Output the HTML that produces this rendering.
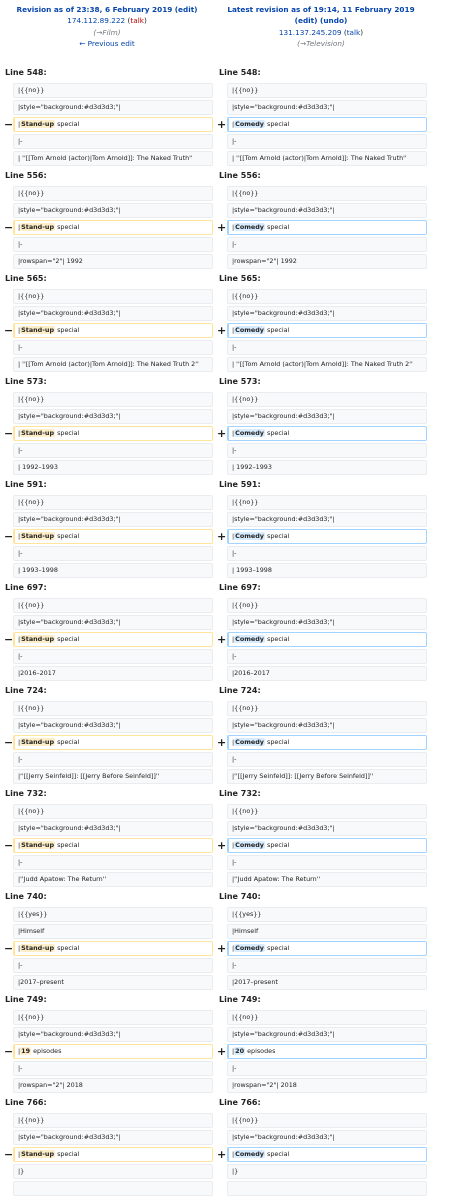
<!DOCTYPE html>
<html><head><meta charset="utf-8"><style>
*{margin:0;padding:0;box-sizing:border-box}
body{width:453px;height:1200px;overflow:hidden;background:#fff;font-family:"DejaVu Sans","Liberation Sans",sans-serif;color:#222}
.top{position:absolute;top:0;left:0;width:453px;height:64px;font-size:7.3px;line-height:11.3px;text-align:center}
.top .c{position:absolute;top:4px;white-space:nowrap}
.b{font-weight:bold;color:#0645ad}
.a{color:#0645ad}
.r{color:#ba0000}
.i{color:#72777d;font-style:italic}
.blk{position:absolute;left:0;width:453px}
.hd{position:absolute;font-size:8px;font-weight:bold;top:4px;color:#222}
.row{position:absolute;height:15px;width:200px;background:#f8f9fa;border:1px solid #eaecf0;border-radius:2px;font-size:6.4px;line-height:13px;padding-left:4px;white-space:nowrap;overflow:hidden;color:#222}
.L{left:13px}.R{left:227px}
.del{background:#fff;border:1px solid #ffe49c;border-left:2px solid #ffe49c;padding-left:3px}
.ins{background:#fff;border:1px solid #a3d3ff;border-left:2px solid #a3d3ff;padding-left:3px}
.del b{background:#feeec8;font-weight:bold;border-radius:2px;padding:0 1px}
.ins b{background:#d8ecff;font-weight:bold;border-radius:2px;padding:0 1px}
.m{position:absolute;font-size:11px;font-weight:bold;line-height:15px}
</style></head><body>
<div class="top">
<div class="c" style="left:0;width:214px"><span class="b">Revision as of 23:38, 6 February 2019</span> <span class="b">(edit)</span><br><span class="a">174.112.89.222</span> (<span class="r">talk</span>)<br><span class="i">(→Film)</span><br><span class="a">← Previous edit</span></div>
<div class="c" style="left:214px;width:214px"><span class="b">Latest revision as of 19:14, 11 February 2019</span><br><span class="b">(edit) (undo)</span><br><span class="a">131.137.245.209</span> (<span class="a">talk</span>)<br><span class="i">(→Television)</span></div>
</div>

<div class="blk" style="top:64px">
<div class="hd" style="left:5px">Line 548:</div><div class="hd" style="left:219px">Line 548:</div>
<div class="row L" style="top:19px">|{{no}}</div><div class="row R" style="top:19px">|{{no}}</div>
<div class="row L" style="top:36px">|style="background:#d3d3d3;"|</div><div class="row R" style="top:36px">|style="background:#d3d3d3;"|</div>
<div class="m" style="left:4px;top:53px">−</div><div class="row L del" style="top:53px">|<b>Stand-up</b> special</div><div class="m" style="left:217px;top:53px">+</div><div class="row R ins" style="top:53px">|<b>Comedy</b> special</div>
<div class="row L" style="top:70px">|-</div><div class="row R" style="top:70px">|-</div>
<div class="row L" style="top:87px">| ''[[Tom Arnold (actor)|Tom Arnold]]: The Naked Truth''</div><div class="row R" style="top:87px">| ''[[Tom Arnold (actor)|Tom Arnold]]: The Naked Truth''</div>
</div>

<div class="blk" style="top:167px">
<div class="hd" style="left:5px">Line 556:</div><div class="hd" style="left:219px">Line 556:</div>
<div class="row L" style="top:19px">|{{no}}</div><div class="row R" style="top:19px">|{{no}}</div>
<div class="row L" style="top:36px">|style="background:#d3d3d3;"|</div><div class="row R" style="top:36px">|style="background:#d3d3d3;"|</div>
<div class="m" style="left:4px;top:53px">−</div><div class="row L del" style="top:53px">|<b>Stand-up</b> special</div><div class="m" style="left:217px;top:53px">+</div><div class="row R ins" style="top:53px">|<b>Comedy</b> special</div>
<div class="row L" style="top:70px">|-</div><div class="row R" style="top:70px">|-</div>
<div class="row L" style="top:87px">|rowspan="2"| 1992</div><div class="row R" style="top:87px">|rowspan="2"| 1992</div>
</div>

<div class="blk" style="top:270px">
<div class="hd" style="left:5px">Line 565:</div><div class="hd" style="left:219px">Line 565:</div>
<div class="row L" style="top:19px">|{{no}}</div><div class="row R" style="top:19px">|{{no}}</div>
<div class="row L" style="top:36px">|style="background:#d3d3d3;"|</div><div class="row R" style="top:36px">|style="background:#d3d3d3;"|</div>
<div class="m" style="left:4px;top:53px">−</div><div class="row L del" style="top:53px">|<b>Stand-up</b> special</div><div class="m" style="left:217px;top:53px">+</div><div class="row R ins" style="top:53px">|<b>Comedy</b> special</div>
<div class="row L" style="top:70px">|-</div><div class="row R" style="top:70px">|-</div>
<div class="row L" style="top:87px">| ''[[Tom Arnold (actor)|Tom Arnold]]: The Naked Truth 2''</div><div class="row R" style="top:87px">| ''[[Tom Arnold (actor)|Tom Arnold]]: The Naked Truth 2''</div>
</div>

<div class="blk" style="top:373px">
<div class="hd" style="left:5px">Line 573:</div><div class="hd" style="left:219px">Line 573:</div>
<div class="row L" style="top:19px">|{{no}}</div><div class="row R" style="top:19px">|{{no}}</div>
<div class="row L" style="top:36px">|style="background:#d3d3d3;"|</div><div class="row R" style="top:36px">|style="background:#d3d3d3;"|</div>
<div class="m" style="left:4px;top:53px">−</div><div class="row L del" style="top:53px">|<b>Stand-up</b> special</div><div class="m" style="left:217px;top:53px">+</div><div class="row R ins" style="top:53px">|<b>Comedy</b> special</div>
<div class="row L" style="top:70px">|-</div><div class="row R" style="top:70px">|-</div>
<div class="row L" style="top:87px">| 1992–1993</div><div class="row R" style="top:87px">| 1992–1993</div>
</div>

<div class="blk" style="top:476px">
<div class="hd" style="left:5px">Line 591:</div><div class="hd" style="left:219px">Line 591:</div>
<div class="row L" style="top:19px">|{{no}}</div><div class="row R" style="top:19px">|{{no}}</div>
<div class="row L" style="top:36px">|style="background:#d3d3d3;"|</div><div class="row R" style="top:36px">|style="background:#d3d3d3;"|</div>
<div class="m" style="left:4px;top:53px">−</div><div class="row L del" style="top:53px">|<b>Stand-up</b> special</div><div class="m" style="left:217px;top:53px">+</div><div class="row R ins" style="top:53px">|<b>Comedy</b> special</div>
<div class="row L" style="top:70px">|-</div><div class="row R" style="top:70px">|-</div>
<div class="row L" style="top:87px">| 1993–1998</div><div class="row R" style="top:87px">| 1993–1998</div>
</div>

<div class="blk" style="top:579px">
<div class="hd" style="left:5px">Line 697:</div><div class="hd" style="left:219px">Line 697:</div>
<div class="row L" style="top:19px">|{{no}}</div><div class="row R" style="top:19px">|{{no}}</div>
<div class="row L" style="top:36px">|style="background:#d3d3d3;"|</div><div class="row R" style="top:36px">|style="background:#d3d3d3;"|</div>
<div class="m" style="left:4px;top:53px">−</div><div class="row L del" style="top:53px">|<b>Stand-up</b> special</div><div class="m" style="left:217px;top:53px">+</div><div class="row R ins" style="top:53px">|<b>Comedy</b> special</div>
<div class="row L" style="top:70px">|-</div><div class="row R" style="top:70px">|-</div>
<div class="row L" style="top:87px">|2016–2017</div><div class="row R" style="top:87px">|2016–2017</div>
</div>

<div class="blk" style="top:682px">
<div class="hd" style="left:5px">Line 724:</div><div class="hd" style="left:219px">Line 724:</div>
<div class="row L" style="top:19px">|{{no}}</div><div class="row R" style="top:19px">|{{no}}</div>
<div class="row L" style="top:36px">|style="background:#d3d3d3;"|</div><div class="row R" style="top:36px">|style="background:#d3d3d3;"|</div>
<div class="m" style="left:4px;top:53px">−</div><div class="row L del" style="top:53px">|<b>Stand-up</b> special</div><div class="m" style="left:217px;top:53px">+</div><div class="row R ins" style="top:53px">|<b>Comedy</b> special</div>
<div class="row L" style="top:70px">|-</div><div class="row R" style="top:70px">|-</div>
<div class="row L" style="top:87px">|''[[Jerry Seinfeld]]: [[Jerry Before Seinfeld]]''</div><div class="row R" style="top:87px">|''[[Jerry Seinfeld]]: [[Jerry Before Seinfeld]]''</div>
</div>

<div class="blk" style="top:785px">
<div class="hd" style="left:5px">Line 732:</div><div class="hd" style="left:219px">Line 732:</div>
<div class="row L" style="top:19px">|{{no}}</div><div class="row R" style="top:19px">|{{no}}</div>
<div class="row L" style="top:36px">|style="background:#d3d3d3;"|</div><div class="row R" style="top:36px">|style="background:#d3d3d3;"|</div>
<div class="m" style="left:4px;top:53px">−</div><div class="row L del" style="top:53px">|<b>Stand-up</b> special</div><div class="m" style="left:217px;top:53px">+</div><div class="row R ins" style="top:53px">|<b>Comedy</b> special</div>
<div class="row L" style="top:70px">|-</div><div class="row R" style="top:70px">|-</div>
<div class="row L" style="top:87px">|''Judd Apatow: The Return''</div><div class="row R" style="top:87px">|''Judd Apatow: The Return''</div>
</div>

<div class="blk" style="top:888px">
<div class="hd" style="left:5px">Line 740:</div><div class="hd" style="left:219px">Line 740:</div>
<div class="row L" style="top:19px">|{{yes}}</div><div class="row R" style="top:19px">|{{yes}}</div>
<div class="row L" style="top:36px">|Himself</div><div class="row R" style="top:36px">|Himself</div>
<div class="m" style="left:4px;top:53px">−</div><div class="row L del" style="top:53px">|<b>Stand-up</b> special</div><div class="m" style="left:217px;top:53px">+</div><div class="row R ins" style="top:53px">|<b>Comedy</b> special</div>
<div class="row L" style="top:70px">|-</div><div class="row R" style="top:70px">|-</div>
<div class="row L" style="top:87px">|2017–present</div><div class="row R" style="top:87px">|2017–present</div>
</div>

<div class="blk" style="top:991px">
<div class="hd" style="left:5px">Line 749:</div><div class="hd" style="left:219px">Line 749:</div>
<div class="row L" style="top:19px">|{{no}}</div><div class="row R" style="top:19px">|{{no}}</div>
<div class="row L" style="top:36px">|style="background:#d3d3d3;"|</div><div class="row R" style="top:36px">|style="background:#d3d3d3;"|</div>
<div class="m" style="left:4px;top:53px">−</div><div class="row L del" style="top:53px">|<b>19</b> episodes</div><div class="m" style="left:217px;top:53px">+</div><div class="row R ins" style="top:53px">|<b>20</b> episodes</div>
<div class="row L" style="top:70px">|-</div><div class="row R" style="top:70px">|-</div>
<div class="row L" style="top:87px">|rowspan="2"| 2018</div><div class="row R" style="top:87px">|rowspan="2"| 2018</div>
</div>

<div class="blk" style="top:1094px">
<div class="hd" style="left:5px">Line 766:</div><div class="hd" style="left:219px">Line 766:</div>
<div class="row L" style="top:19px">|{{no}}</div><div class="row R" style="top:19px">|{{no}}</div>
<div class="row L" style="top:36px">|style="background:#d3d3d3;"|</div><div class="row R" style="top:36px">|style="background:#d3d3d3;"|</div>
<div class="m" style="left:4px;top:53px">−</div><div class="row L del" style="top:53px">|<b>Stand-up</b> special</div><div class="m" style="left:217px;top:53px">+</div><div class="row R ins" style="top:53px">|<b>Comedy</b> special</div>
<div class="row L" style="top:70px">|}</div><div class="row R" style="top:70px">|}</div>
<div class="row L" style="top:87px"></div><div class="row R" style="top:87px"></div>
</div>
</body></html>
